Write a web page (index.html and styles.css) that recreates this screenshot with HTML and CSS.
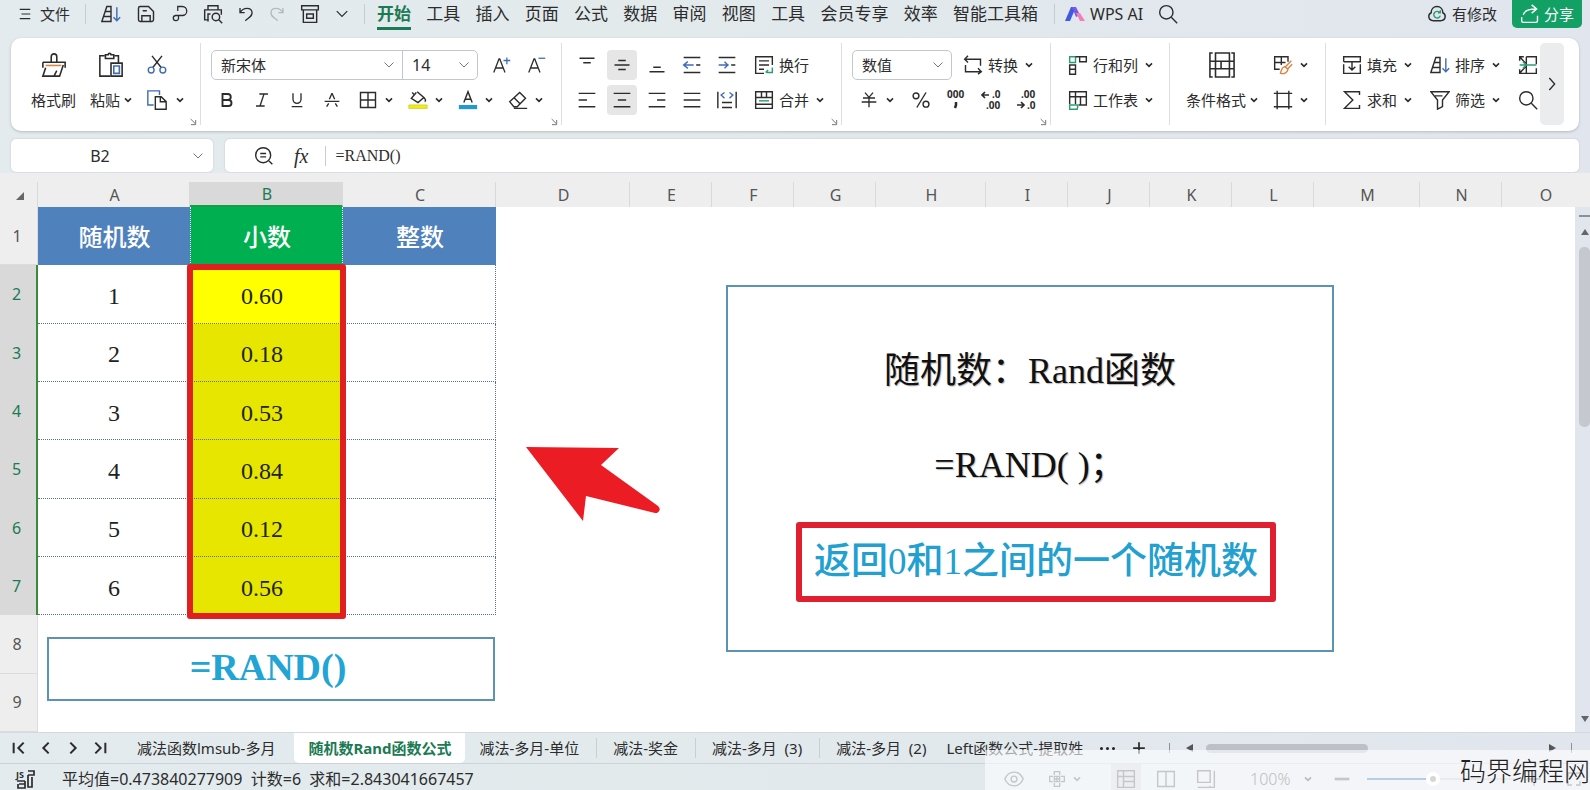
FILE: index.html
```html
<!DOCTYPE html>
<html lang="zh-CN">
<head>
<meta charset="utf-8">
<title>随机数Rand函数公式</title>
<link rel="stylesheet" href="styles.css">
</head>
<body>
<svg class="sprite" aria-hidden="true">
  <symbol id="menu" viewBox="0 0 24 24"><path d="M3 4h18M6 12h15M3 20h18"/></symbol>
  <symbol id="sort" viewBox="0 0 24 24"><path d="M1 21L7 3h5v18zM5 9h7M3.500 15H12"/><path class="blue" d="M19 4v16M15 16l4 4 4-4"/></symbol>
  <symbol id="save" viewBox="0 0 24 24"><path d="M5 3h10l6 6v10a2 2 0 0 1-2 2H5a2 2 0 0 1-2-2V5a2 2 0 0 1 2-2zM7 21v-7h10v7M8 8h5"/></symbol>
  <symbol id="hook" viewBox="0 0 24 24"><path d="M9 8V2h6a6 6 0 0 1 0 12H6a3.500 3.500 0 1 0 4 4v-4"/></symbol>
  <symbol id="preview" viewBox="0 0 24 24"><path d="M6 7V2h12v5M7 19H2V7h20v6M6 21v-9h3"/><circle cx="15.500" cy="15.500" r="4.500"/><path d="M19 19l4 4"/></symbol>
  <symbol id="undo" viewBox="0 0 24 24"><path d="M3 3v7h7M3 10C8 1 20 2 21 9c1 6-4 8-10 13"/></symbol>
  <symbol id="redo" viewBox="0 0 24 24"><path d="M21 3v7h-7M21 10C16 1 4 2 3 9c-1 6 4 8 10 13"/></symbol>
  <symbol id="archive" viewBox="0 0 24 24"><path d="M2 2h20v5H2zM4 7v15h16V7M8 12h8v5H8z"/></symbol>
  <symbol id="down" viewBox="0 0 24 24"><path d="M3 7l9 9 9-9"/></symbol>
  <symbol id="right" viewBox="0 0 24 24"><path d="M8 3l8 9-8 9"/></symbol>
  <symbol id="search" viewBox="0 0 24 24"><circle cx="10" cy="10" r="8"/><path d="M16 16l7 7"/></symbol>
  <symbol id="cloud" viewBox="0 0 24 24"><path d="M7 20a5 5 0 0 1-2-9.500C5 6 8 3 12 3s7 3 7 7.500A5 5 0 0 1 17 20z"/><path class="green" d="M15 10a4 4 0 1 0 1 4M13 10.500h3v-3"/></symbol>
  <symbol id="share" viewBox="0 0 24 24"><path d="M21 14v6a2 2 0 0 1-2 2H4a2 2 0 0 1-2-2v-4M4 13c1-5 6-7 15-7M14 1l6 5-6 5"/></symbol>
  <symbol id="brush" viewBox="0 0 28 28"><path d="M2 11h24v6M2 17v-6M11 11V5a3 3 0 0 1 6 0v6M5 17L2 26h18l4-12M14 26l3-6"/><path class="orange" d="M5 14.500h17"/></symbol>
  <symbol id="paste" viewBox="0 0 28 28"><path d="M7 4H2v22h11M18 4h4v8M8 7V3h3c0-2 3-2 3 0h3v4z"/><path d="M14 12h12v14H14z"/><path class="blue" d="M17 15h6v8h-6z"/></symbol>
  <symbol id="cut" viewBox="0 0 24 24"><path d="M6 1l11 14M18 1L7 15"/><g class="blue"><circle cx="5" cy="18" r="3.500"/><circle cx="19" cy="18" r="3.500"/></g></symbol>
  <symbol id="copy" viewBox="0 0 24 24"><path class="blue" d="M8 18H1V1h14v5"/><path d="M10 8h7l6 6v9H10zM16 8v6h7"/></symbol>
  <symbol id="launch" viewBox="0 0 24 24"><path d="M5 3l13 13M6 20h14V6"/></symbol>
  <symbol id="bigger" viewBox="0 0 24 24"><path d="M1 22L8 4h1l7 18M4 16h9"/><path class="blue" d="M14 6h9M18.500 2v9"/></symbol>
  <symbol id="smaller" viewBox="0 0 24 24"><path d="M1 22L8 4h1l7 18M4 16h9"/><path class="blue" d="M14 3h9"/></symbol>
  <symbol id="bold" viewBox="0 0 24 24"><path class="thick" d="M6 4h7a4 4 0 0 1 0 8H6zM6 12h8a4 4 0 0 1 0 8H6z"/></symbol>
  <symbol id="italic" viewBox="0 0 24 24"><path d="M8 3h13M3 21h13M15 3L9 21"/></symbol>
  <symbol id="under" viewBox="0 0 24 24"><path d="M6 2v9a6 6 0 0 0 12 0V2M4 22h16"/></symbol>
  <symbol id="strike" viewBox="0 0 24 24"><path d="M12 2L8 11M12 2l4 9M1 14h22M7 17l-3 5M17 17l3 5"/></symbol>
  <symbol id="borders" viewBox="0 0 24 24"><path d="M3 3h18v18H3zM12 3v18M3 12h18"/></symbol>
  <symbol id="bucket" viewBox="0 0 24 24"><path d="M11 2l8 7-7 6-8-5 6-7M7 5L5 3M19 9c2 2 3 4 1 5"/><path class="fill-y" d="M1 18h22v4H1z"/></symbol>
  <symbol id="fontcolor" viewBox="0 0 24 24"><path d="M7 15l5-13 5 13M8.500 11h7"/><path class="fill-b" d="M1 18h22v5H1z"/></symbol>
  <symbol id="eraser" viewBox="0 0 24 24"><path d="M2 14L14 3l7 7-10 10H7zM7 9l8 8M7 22h16"/></symbol>
  <symbol id="vtop" viewBox="0 0 24 24"><path d="M2 3h20M7 9h10"/></symbol>
  <symbol id="vmid" viewBox="0 0 24 24"><path d="M7 6h10M2 12h20M7 18h10"/></symbol>
  <symbol id="vbot" viewBox="0 0 24 24"><path d="M7 15h10M2 21h20"/></symbol>
  <symbol id="left" viewBox="0 0 24 24"><path d="M2 4h20M2 12h10M2 20h20"/></symbol>
  <symbol id="center" viewBox="0 0 24 24"><path d="M2 4h20M7 12h10M2 20h20"/></symbol>
  <symbol id="ralign" viewBox="0 0 24 24"><path d="M2 4h20M12 12h10M2 20h20"/></symbol>
  <symbol id="justify" viewBox="0 0 24 24"><path d="M2 4h20M2 12h20M2 20h20"/></symbol>
  <symbol id="outdent" viewBox="0 0 24 24"><path d="M2 3h20M2 21h20M17 12h5"/><path class="blue" d="M14 12H2M7 8l-5 4 5 4"/></symbol>
  <symbol id="indent" viewBox="0 0 24 24"><path d="M2 3h20M2 21h20M17 12h5"/><path class="blue" d="M2 12h12M9 8l4 4-4 4"/></symbol>
  <symbol id="spread" viewBox="0 0 24 24"><path d="M1 2v20M23 2v20M6 15h12M6 21h12"/><path class="blue" d="M9 3L5 6l4 4M15 3l4 3-4 4"/></symbol>
  <symbol id="wrap" viewBox="0 0 24 24"><path d="M22 12V2H2v20h10M6 7h12M6 12h12M6 17h6"/><path class="green" d="M22 15v6h-7M17 18l-3 3"/></symbol>
  <symbol id="merge" viewBox="0 0 24 24"><path d="M2 2h20v20H2zM2 9h20M9 2v7M15 2v7M2 17h20"/><path class="green" d="M6 13h12"/></symbol>
  <symbol id="convert" viewBox="0 0 24 24"><path d="M6 1L2 5l4 4M2 5h19v8M3 12v8h18M18 16l4 4-4 3"/></symbol>
  <symbol id="yuan" viewBox="0 0 24 24"><path d="M6 1l6 7 6-7M3 9h18M1 15h22M12 8v15"/></symbol>
  <symbol id="percent" viewBox="0 0 24 24"><circle cx="6" cy="7" r="3.500"/><circle cx="18" cy="17" r="3.500"/><path d="M18 3L7 21"/></symbol>
  <symbol id="rowcol" viewBox="0 0 24 24"><path class="green" d="M2 2h7v7H2z"/><path d="M9 2h13v6h-8V2M2 12h7v11H2zM2 17h7"/></symbol>
  <symbol id="sheeticon" viewBox="0 0 24 24"><path d="M2 17V2h20v16h-9M2 8h20M9 2v15M15 8v10"/><path class="green" d="M2 18h10l-1 5H2z"/></symbol>
  <symbol id="condition" viewBox="0 0 28 28"><path d="M4 1H1v26h3M24 1h3v26h-3M1 10h6M1 18h6M7 1h15v9H7zM13 10h9v8h-9zM7 10v17h15v-9H7M22 10h5M22 18h5"/></symbol>
  <symbol id="style" viewBox="0 0 24 24"><path d="M8 17H2V2h16v6M2 9h13M10 2v10"/><path class="orange" d="M22 7l-8 8M23 11l-6 6M14 14l4 3c-1 5-5 6-9 5 1-3 1-7 5-8z"/></symbol>
  <symbol id="frame" viewBox="0 0 24 24"><path d="M5 1v22M19 1v22M1 4h22M1 20h22"/></symbol>
  <symbol id="fill" viewBox="0 0 24 24"><path d="M2 8V2h20v6H2M2 11v11h20V11M12 8v10M8 14l4 4 4-4"/></symbol>
  <symbol id="sum" viewBox="0 0 24 24"><path d="M21 6V2H3l10 10L3 22h18v-4"/></symbol>
  <symbol id="filter" viewBox="0 0 24 24"><path d="M1 2h22l-8 10v8l-6 3V12zM6 7h9"/></symbol>
  <symbol id="freeze" viewBox="0 0 24 24"><path d="M2 7V2h5M2 17v5h20v-6M10 2h12v9M10 2v20M2 2l7 8M2 22l7-8"/><path class="green" d="M2 12h20M6 8l4 4-4 4"/></symbol>
  <symbol id="zoomout" viewBox="0 0 24 24"><circle cx="11" cy="11" r="9"/><path d="M18 18l4 4M7.500 9h7M7.500 13h7"/></symbol>
  <symbol id="first" viewBox="0 0 24 24"><path d="M4 4v16M19 4l-8 8 8 8"/></symbol>
  <symbol id="prev" viewBox="0 0 24 24"><path d="M16 4l-8 8 8 8"/></symbol>
  <symbol id="next" viewBox="0 0 24 24"><path d="M8 4l8 8-8 8"/></symbol>
  <symbol id="last" viewBox="0 0 24 24"><path d="M20 4v16M5 4l8 8-8 8"/></symbol>
  <symbol id="plus" viewBox="0 0 24 24"><path d="M12 2v20M2 12h20"/></symbol>
  <symbol id="minus" viewBox="0 0 24 24"><path d="M1 12h22"/></symbol>
  <symbol id="eye" viewBox="0 0 24 24"><path d="M1 12c5-11 17-11 22 0-5 11-17 11-22 0z"/><circle cx="12" cy="12" r="3.500"/></symbol>
  <symbol id="cross" viewBox="0 0 24 24"><path d="M8 6V1h8v5M8 18v5h8v-5M6 8H1v8h5M18 8h5v8h-5M8 8h8v8H8zM12 8v8M8 12h8"/></symbol>
  <symbol id="normal" viewBox="0 0 24 24"><path d="M2 2h20v20H2zM2 9h20M9 2v20M9 15h13"/></symbol>
  <symbol id="split" viewBox="0 0 24 24"><path d="M2 3h20v18H2zM12 3v18"/></symbol>
  <symbol id="pages" viewBox="0 0 24 24"><path d="M2 2h15v14H2zM22 2v20H2M17 22v-2"/></symbol>
  <symbol id="expand" viewBox="0 0 24 24"><path d="M15 3h6v6M9 21H3v-6M3 9V3h6M21 15v6h-6"/></symbol>
</svg>

<header class="topbar">
  <nav class="quick" aria-label="快速访问">
    <button class="file"><svg class="i14"><use href="#menu"/></svg>文件</button>
    <span class="vline"></span>
    <button aria-label="排序"><svg class="i20"><use href="#sort"/></svg></button>
    <button aria-label="保存"><svg class="i20"><use href="#save"/></svg></button>
    <button aria-label="输出"><svg class="i18"><use href="#hook"/></svg></button>
    <button aria-label="打印预览"><svg class="i20"><use href="#preview"/></svg></button>
    <button aria-label="撤销"><svg class="i16"><use href="#undo"/></svg></button>
    <button aria-label="恢复" class="faded"><svg class="i16"><use href="#redo"/></svg></button>
    <button aria-label="归档"><svg class="i20"><use href="#archive"/></svg></button>
    <button aria-label="更多"><svg class="i14"><use href="#down"/></svg></button>
    <span class="vline"></span>
  </nav>
  <nav class="menus" aria-label="功能区">
    <button class="on">开始</button><button>工具</button><button>插入</button><button>页面</button><button>公式</button><button>数据</button><button>审阅</button><button>视图</button><button>工具</button><button>会员专享</button><button>效率</button><button>智能工具箱</button>
  </nav>
  <span class="vline ai-line"></span>
  <button class="ai">
    <svg class="logo" viewBox="0 0 20 16"><path d="M0 15L6 1h5L5 15z" fill="#3c5be0"/><path d="M7 1h4l4 8-4 2z" fill="#7a58e8"/><path d="M11 7h4l5 8h-5z" fill="#f47fb6"/></svg>WPS AI</button>
  <button class="find" aria-label="搜索"><svg class="i20"><use href="#search"/></svg></button>
  <button class="changed"><svg class="i20"><use href="#cloud"/></svg>有修改</button>
  <button class="share"><svg class="i20"><use href="#share"/></svg>分享</button>
</header>

<section class="ribbon" aria-label="开始">
  <div class="group g-clip">
    <button class="big"><svg class="i26"><use href="#brush"/></svg><span>格式刷</span></button>
    <button class="big"><svg class="i26"><use href="#paste"/></svg><span>粘贴<svg class="caret"><use href="#down"/></svg></span></button>
    <div class="stack">
      <button class="tool" aria-label="剪切"><svg class="i20"><use href="#cut"/></svg></button>
      <button class="tool" aria-label="复制"><svg class="i20"><use href="#copy"/></svg><svg class="caret"><use href="#down"/></svg></button>
    </div>
    <svg class="launch"><use href="#launch"/></svg>
  </div>

  <div class="group g-font">
    <div class="stack">
      <div class="row">
        <div class="combo">
          <label class="pick face"><select aria-label="字体"><option>新宋体</option></select><svg class="chev"><use href="#down"/></svg></label>
          <label class="pick size"><select aria-label="字号"><option>14</option></select><svg class="chev"><use href="#down"/></svg></label>
        </div>
        <button class="sq" aria-label="增大字号"><svg class="i18"><use href="#bigger"/></svg></button>
        <button class="sq" aria-label="减小字号"><svg class="i18"><use href="#smaller"/></svg></button>
      </div>
      <div class="row">
        <button class="sq" aria-label="加粗"><svg class="i18"><use href="#bold"/></svg></button>
        <button class="sq" aria-label="倾斜"><svg class="i16"><use href="#italic"/></svg></button>
        <button class="sq" aria-label="下划线"><svg class="i16"><use href="#under"/></svg></button>
        <button class="sq" aria-label="删除线"><svg class="i16"><use href="#strike"/></svg></button>
        <button class="drop" aria-label="边框"><svg class="i20"><use href="#borders"/></svg><svg class="caret"><use href="#down"/></svg></button>
        <button class="drop" aria-label="填充颜色"><svg class="i20"><use href="#bucket"/></svg><svg class="caret"><use href="#down"/></svg></button>
        <button class="drop" aria-label="字体颜色"><svg class="i20"><use href="#fontcolor"/></svg><svg class="caret"><use href="#down"/></svg></button>
        <button class="drop" aria-label="清除"><svg class="i20"><use href="#eraser"/></svg><svg class="caret"><use href="#down"/></svg></button>
      </div>
    </div>
    <svg class="launch"><use href="#launch"/></svg>
  </div>

  <div class="group g-align">
    <div class="stack">
      <div class="row">
        <button class="sq" aria-label="顶端对齐"><svg class="i18"><use href="#vtop"/></svg></button>
        <button class="sq" aria-label="垂直居中"><span class="active"><svg class="i18"><use href="#vmid"/></svg></span></button>
        <button class="sq" aria-label="底端对齐"><svg class="i18"><use href="#vbot"/></svg></button>
        <button class="sq" aria-label="减少缩进"><svg class="i20"><use href="#outdent"/></svg></button>
        <button class="sq" aria-label="增加缩进"><svg class="i20"><use href="#indent"/></svg></button>
        <button class="tool wide"><svg class="i20"><use href="#wrap"/></svg>换行</button>
      </div>
      <div class="row">
        <button class="sq" aria-label="左对齐"><svg class="i20"><use href="#left"/></svg></button>
        <button class="sq" aria-label="水平居中"><span class="active"><svg class="i20"><use href="#center"/></svg></span></button>
        <button class="sq" aria-label="右对齐"><svg class="i20"><use href="#ralign"/></svg></button>
        <button class="sq" aria-label="两端对齐"><svg class="i20"><use href="#justify"/></svg></button>
        <button class="sq" aria-label="分散对齐"><svg class="i20"><use href="#spread"/></svg></button>
        <button class="tool wide"><svg class="i20"><use href="#merge"/></svg>合并<svg class="caret"><use href="#down"/></svg></button>
      </div>
    </div>
    <svg class="launch"><use href="#launch"/></svg>
  </div>

  <div class="group g-num">
    <div class="stack">
      <div class="row">
        <div class="combo"><label class="pick kind"><select aria-label="数字格式"><option>数值</option></select><svg class="chev"><use href="#down"/></svg></label></div>
        <button class="tool conv"><svg class="i20"><use href="#convert"/></svg>转换<svg class="caret"><use href="#down"/></svg></button>
      </div>
      <div class="row">
        <button class="drop money" aria-label="货币"><svg class="i16"><use href="#yuan"/></svg><svg class="caret"><use href="#down"/></svg></button>
        <button class="sq" aria-label="百分比"><svg class="i20"><use href="#percent"/></svg></button>
        <button class="sq" aria-label="千位分隔"><svg class="dec" viewBox="0 0 22 22"><text x="2" y="9">000</text><path d="M11 13v3l-1 3" class="thick"/></svg></button>
        <button class="sq" aria-label="增加小数位"><svg class="dec" viewBox="0 0 22 22"><path d="M9 6H2M5 3L2 6l3 3"/><text x="12" y="9">.0</text><text x="6" y="20">.00</text></svg></button>
        <button class="sq" aria-label="减少小数位"><svg class="dec" viewBox="0 0 22 22"><text x="6" y="9">.00</text><path d="M2 16h7M6 13l3 3-3 3"/><text x="12" y="20">.0</text></svg></button>
      </div>
    </div>
    <svg class="launch"><use href="#launch"/></svg>
  </div>

  <div class="group g-cells">
    <div class="stack">
      <button class="tool"><svg class="i20"><use href="#rowcol"/></svg>行和列<svg class="caret"><use href="#down"/></svg></button>
      <button class="tool"><svg class="i20"><use href="#sheeticon"/></svg>工作表<svg class="caret"><use href="#down"/></svg></button>
    </div>
  </div>

  <div class="group g-style">
    <button class="big"><svg class="i26"><use href="#condition"/></svg><span>条件格式<svg class="caret"><use href="#down"/></svg></span></button>
    <div class="stack">
      <button class="tool" aria-label="样式"><svg class="i20"><use href="#style"/></svg><svg class="caret"><use href="#down"/></svg></button>
      <button class="tool" aria-label="单元格"><svg class="i20"><use href="#frame"/></svg><svg class="caret"><use href="#down"/></svg></button>
    </div>
  </div>

  <div class="group g-edit">
    <div class="stack">
      <button class="tool"><svg class="i20"><use href="#fill"/></svg>填充<svg class="caret"><use href="#down"/></svg></button>
      <button class="tool"><svg class="i20"><use href="#sum"/></svg>求和<svg class="caret"><use href="#down"/></svg></button>
    </div>
    <div class="stack">
      <button class="tool"><svg class="i20"><use href="#sort"/></svg>排序<svg class="caret"><use href="#down"/></svg></button>
      <button class="tool"><svg class="i20"><use href="#filter"/></svg>筛选<svg class="caret"><use href="#down"/></svg></button>
    </div>
    <div class="stack end-stack">
      <button class="tool" aria-label="冻结"><svg class="i20"><use href="#freeze"/></svg></button>
      <button class="tool" aria-label="查找"><svg class="i20"><use href="#search"/></svg></button>
    </div>
    <button class="more" aria-label="更多工具"><svg class="i16"><use href="#right"/></svg></button>
  </div>
</section>

<section class="formula">
  <div class="namebox"><input aria-label="名称框" value="B2"><svg class="chev"><use href="#down"/></svg></div>
  <div class="fxbar">
    <button aria-label="浏览公式"><svg class="i20"><use href="#zoomout"/></svg></button>
    <button class="fx">fx</button>
    <span class="vline"></span>
    <input aria-label="编辑栏" value="=RAND()">
  </div>
</section>

<main class="sheet">
  <table>
    <colgroup><col class="c-head"><col class="c-a"><col class="c-b"><col class="c-b"><col class="c-d"><col class="c-n"><col class="c-n"><col class="c-n"><col class="c-h"><col class="c-n"><col class="c-n"><col class="c-n"><col class="c-n"><col class="c-m"><col class="c-n"><col></colgroup>
    <thead><tr><th class="corner"><svg viewBox="0 0 8 8"><path d="M8 0v8H0z"/></svg></th><th>A</th><th class="sel">B</th><th>C</th><th>D</th><th>E</th><th>F</th><th>G</th><th>H</th><th>I</th><th>J</th><th>K</th><th>L</th><th>M</th><th>N</th><th>O</th></tr></thead>
    <tbody>
      <tr class="titles"><th>1</th><td>随机数</td><td class="pick-col">小数</td><td>整数</td><td colspan="12"></td></tr>
      <tr class="data"><th>2</th><td>1</td><td class="val cur">0.60</td><td class="end"></td><td colspan="12"></td></tr>
      <tr class="data"><th>3</th><td>2</td><td class="val">0.18</td><td class="end"></td><td colspan="12"></td></tr>
      <tr class="data"><th>4</th><td>3</td><td class="val">0.53</td><td class="end"></td><td colspan="12"></td></tr>
      <tr class="data"><th>5</th><td>4</td><td class="val">0.84</td><td class="end"></td><td colspan="12"></td></tr>
      <tr class="data"><th>6</th><td>5</td><td class="val">0.12</td><td class="end"></td><td colspan="12"></td></tr>
      <tr class="data"><th>7</th><td>6</td><td class="val">0.56</td><td class="end"></td><td colspan="12"></td></tr>
      <tr><th>8</th><td colspan="15"></td></tr>
      <tr><th>9</th><td colspan="15"></td></tr>
    </tbody>
  </table>
  <div class="mark"></div>
  <div class="formula-box">=RAND()</div>
  <svg class="arrow" viewBox="0 0 136 76"><path d="M0 1l93 1-18 17 57 41q4 4-1 7l-2 0-69-17-3 25z"/></svg>
  <div class="note">
    <p>随机数：Rand函数</p>
    <p>=RAND( )；</p>
    <p class="key">返回0和1之间的一个随机数</p>
  </div>
  <div class="vscroll"><i></i><svg viewBox="0 0 8 8"><path d="M4 1l4 6H0z"/></svg><b></b><svg viewBox="0 0 8 8"><path d="M0 1h8L4 7z"/></svg></div>
</main>

<footer>
  <div class="tabs">
    <div class="nav">
      <button aria-label="第一个"><svg class="i16"><use href="#first"/></svg></button>
      <button aria-label="上一个"><svg class="i16"><use href="#prev"/></svg></button>
      <button aria-label="下一个"><svg class="i16"><use href="#next"/></svg></button>
      <button aria-label="最后一个"><svg class="i16"><use href="#last"/></svg></button>
    </div>
    <button class="tab lead">减法函数lmsub-多月</button>
    <button class="tab current">随机数Rand函数公式</button>
    <button class="tab ruled">减法-多月-单位</button>
    <button class="tab ruled">减法-奖金</button>
    <button class="tab ruled">减法-多月&nbsp; (3)</button>
    <button class="tab">减法-多月&nbsp; (2)</button>
    <button class="tab cut">Left函数公式-提取姓</button>
    <button class="dots" aria-label="更多工作表"><i></i><i></i><i></i></button>
    <button class="add" aria-label="新建工作表"><svg class="i14"><use href="#plus"/></svg></button>
    <div class="hscroll"><i></i><svg viewBox="0 0 8 8"><path d="M7 0v8L0 4z"/></svg><b></b><svg class="far" viewBox="0 0 8 8"><path d="M1 0v8l7-4z"/></svg><i></i></div>
  </div>
  <div class="status">
    <svg class="jsp" viewBox="0 0 20 20"><text x="1" y="9">JS</text><path d="M13 2h6v4h-6M13 6v12h4V8M2 12h8M4 15h6v4H3v-4M10 12v3"/></svg>
    <output>平均值=0.473840277909&nbsp; 计数=6&nbsp; 求和=2.843041667457</output>
    <div class="views">
      <button aria-label="护眼"><svg class="i20"><use href="#eye"/></svg></button>
      <button class="cross" aria-label="定位"><svg class="i16"><use href="#cross"/></svg><svg class="caret"><use href="#down"/></svg></button>
      <button class="view on" aria-label="普通视图"><svg class="i20"><use href="#normal"/></svg></button>
      <button class="view" aria-label="分栏"><svg class="i20"><use href="#split"/></svg></button>
      <button class="view" aria-label="分页预览"><svg class="i20"><use href="#pages"/></svg></button>
      <button class="pct">100%<svg class="caret"><use href="#down"/></svg></button>
      <button aria-label="缩小"><svg class="i16 heavy"><use href="#minus"/></svg></button>
      <input type="range" min="0" max="100" value="43" aria-label="显示比例">
      <button aria-label="放大"><svg class="i16"><use href="#plus"/></svg></button>
      <button class="full" aria-label="全屏"><svg class="i16"><use href="#expand"/></svg></button>
    </div>
  </div>
  <div class="stamp">码界编程网</div>
</footer>
</body>
</html>
```
FILE: styles.css
```css
* { box-sizing: border-box; }
html, body { height: 100%; }
body {
  margin: 0;
  display: flex;
  flex-direction: column;
  overflow: hidden;
  background: linear-gradient(90deg, #e3ebef, #e2eaec 40%, #e1e6ee);
  color: #2c2c2c;
  font: 15px/20px "Noto Sans", "Noto Sans CJK SC", sans-serif;
}
button, input, select {
  font: inherit;
  color: inherit;
  background: none;
  border: 0;
  margin: 0;
  padding: 0;
  outline: 0;
}
button { display: flex; align-items: center; flex: none; white-space: nowrap; }
svg { fill: none; stroke: currentColor; stroke-width: 1.7; flex: none; }
.sprite { position: absolute; width: 0; height: 0; }
.i14 { width: 14px; height: 14px; stroke-width: 2; }
.i16 { width: 16px; height: 16px; stroke-width: 2; }
.i18 { width: 18px; height: 18px; }
.i20 { width: 20px; height: 20px; }
.i26 { width: 26px; height: 26px; }
.caret { width: 8px; height: 8px; stroke-width: 5; }
.chev { width: 12px; height: 12px; stroke: #777; stroke-width: 2; }
.blue { stroke: #3f6cb8; }
.green { stroke: #2b9c74; }
.orange { stroke: #d98443; }
.thick { stroke-width: 2.5; }
.fill-y { fill: #f5f200; stroke: #c9c93a; stroke-width: 1; }
.fill-b { fill: #1f9bd0; stroke: none; }
.vline { width: 1px; height: 20px; background: #c6ccd2; flex: none; }

/* title row */
.topbar { display: flex; height: 38px; padding: 0 8px 10px 18px; align-items: center; flex: none; }
.quick { display: flex; align-items: center; width: 359px; justify-content: space-between; padding-right: 12px; flex: none; }
.file { gap: 8px; }
.faded { color: #b3b9bd; }
.menus { display: flex; justify-content: space-between; width: 661px; flex: none; font-size: 17px; }
.menus .on { color: #1b7a53; font-weight: 700; border-bottom: 3px solid #1b7a53; padding: 6px 0 3px; margin: -6px 0; }
.ai-line { margin: 0 10px 0 16px; }
.ai { gap: 5px; font-size: 16px; }
.logo { width: 20px; height: 16px; stroke: none; }
.find { margin-left: 15px; }
.changed { margin-left: auto; gap: 5px; }
.share { margin-left: 15px; width: 70px; height: 28px; gap: 4px; justify-content: center; background: #12a065; color: #fff; border-radius: 0 0 5px 5px; }

/* ribbon */
.ribbon { display: flex; flex: none; height: 93px; margin: 0 11px; background: #fff; border-radius: 10px; box-shadow: 0 1px 3px #b5babf; padding: 5px 0 6px; }
.group { position: relative; display: flex; flex: none; height: 82px; padding-top: 4px; border-right: 1px solid #dcdee0; }
.launch { position: absolute; right: 3px; bottom: -1px; width: 8px; height: 8px; stroke-width: 3; color: #777; }
.stack { display: flex; flex-direction: column; }
.stack > * { height: 35px; }
.row { display: flex; align-items: center; }
.tool { gap: 5px; }
.tool .caret { margin-left: 2px; }
.big { flex-direction: column; height: 70px; padding-top: 5px; }
.big > span { display: flex; align-items: center; gap: 4px; height: 35px; margin-top: 4px; }
.sq { width: 35px; height: 35px; justify-content: center; }
.drop { width: 50px; height: 35px; justify-content: space-between; padding: 0 6px 0 9px; }
.active { display: flex; width: 30px; height: 30px; align-items: center; justify-content: center; background: #e6e6e6; border-radius: 4px; }
.combo { display: flex; height: 30px; border: 1px solid #c4c7ca; border-radius: 5px; }
.pick { display: grid; align-items: center; }
.pick > * { grid-area: 1 / 1; }
.pick select { appearance: none; width: 100%; height: 28px; padding-left: 9px; }
.pick .chev { justify-self: end; margin-right: 7px; pointer-events: none; }
.face { width: 190px; }
.size { width: 75px; border-left: 1px solid #c4c7ca; font-size: 16px; }
.kind { width: 98px; }
.g-clip { width: 190px; padding-left: 20px; gap: 14px; }
.g-clip .stack { padding-left: 1px; }
.g-clip .tool .caret { margin-left: 4px; }
.g-font { width: 361px; padding-left: 10px; }
.g-font .row:first-child .sq:nth-child(2) { margin-left: 6px; }
.g-font .row:last-child { margin-left: -2px; }
.g-align { width: 280px; padding-left: 7px; }
.wide { margin-left: 10px; }
.g-num { width: 209px; padding-left: 10px; }
.conv { margin-left: 11px; }
.money { width: 51px; padding: 0 9px 0 9px; }
.dec { width: 22px; height: 22px; }
.dec text { font-size: 10px; font-weight: 700; fill: currentColor; stroke: none; }
.g-cells { width: 119px; padding-left: 17px; }
.g-style { width: 156px; padding-left: 16px; gap: 15px; }
.g-edit { flex: 1; padding-left: 16px; border: 0; }
.g-edit .stack { margin-right: 18px; }
.g-edit .end-stack { margin-right: 0; }
.more { margin: -4px 15px 0 auto; width: 24px; height: 82px; background: #ebecee; border-radius: 5px; justify-content: center; }

/* name box and formula bar */
.formula { display: flex; flex: none; gap: 12px; padding: 8px 11px 0; height: 42px; }
.namebox, .fxbar { display: flex; align-items: center; background: #fff; border-radius: 5px; box-shadow: 0 0 2px #bbc0c4; height: 33px; }
.namebox { width: 202px; padding-right: 9px; }
.namebox input { flex: 1; min-width: 0; text-align: center; padding-right: 3px; font-size: 16px; }
.fxbar { flex: 1; padding-left: 29px; }
.fx { font: italic 20px/24px "Liberation Serif", serif; margin: 0 17px 0 20px; }
.fxbar input { flex: 1; padding-left: 9px; font: 16px/24px "Liberation Serif", serif; }

/* grid */
.sheet { position: relative; flex: 1; min-height: 0; padding-top: 9px; background: #eeeeee; overflow: hidden; }
table { width: 100%; height: 100%; table-layout: fixed; border-collapse: separate; border-spacing: 0; }
.c-head { width: 38px; }
.c-a { width: 152px; }
.c-b { width: 153px; }
.c-d { width: 134px; }
.c-n { width: 82px; }
.c-h { width: 110px; }
.c-m { width: 106px; }
th, td { padding: 0; text-align: center; }
th { font-weight: 400; font-size: 16px; color: #555; }
thead th { height: 25px; border-right: 1px solid #d9d9d9; padding-left: 2px; }
thead th:last-child { padding-left: 0; border: 0; }
thead .sel { background: #d9d9d9; color: #1b7a53; border-bottom: 2px solid #14a047; }
.corner svg { width: 8px; height: 8px; fill: #666; stroke: none; vertical-align: middle; }
tbody tr { height: 58px; }
tbody th { border-bottom: 1px solid #dcdcdc; padding-right: 3px; border-right: 1px solid #dcdcdc; }
td { background: #fff; font: 24px/30px "Liberation Serif", "Noto Sans CJK SC", serif; }
.titles td { color: #fff; font-weight: 500; padding-top: 3px; padding-left: 1px; }
.titles td:nth-child(-n+4) { background: #4f81bd; }
.titles td.pick-col { background: #00b050; border: 1px dotted #fff; border-width: 0 1px; }
.data th { background: #d9d9d9; color: #1b7a53; border-right: 2px solid #3a8a3a; border-bottom: 0; }
.data td:nth-child(-n+4) { border-bottom: 1px dotted #5b6f91; color: #222; padding-top: 4px; }
.data .val { background: #e6e600; padding-right: 9px; }
.data .cur { background: #ffff00; }
.data .end { border-right: 1px dotted #5b6f91; }

/* objects floating over the grid */
.mark { position: absolute; left: 187px; top: 91px; width: 159px; height: 355px; border: 6px solid #e02020; border-radius: 3px; }
.formula-box { position: absolute; left: 47px; top: 464px; width: 448px; height: 64px; border: 2px solid #5b93b5; color: #22a4d4; font: 700 38px/56px "Liberation Serif", serif; text-align: center; padding-right: 6px; }
.arrow { position: absolute; left: 526px; top: 273px; width: 136px; height: 76px; fill: #ec1c24; stroke: none; }
.note { position: absolute; left: 726px; top: 112px; width: 608px; height: 367px; border: 2px solid #5b93b5; color: #111; font: 36px/48px "Liberation Serif", "Noto Sans CJK SC", serif; text-align: center; padding: 60px 0 0; }
.note p { margin: 0 0 46px; text-shadow: 1px 1px 1px #bbb; }
.note .key { margin: -13px 56px 0 68px; height: 80px; border: 6px solid #e02030; border-radius: 3px; color: #22a0d0; font-size: 37px; line-height: 68px; white-space: nowrap; text-shadow: none; font-weight: 500; }
.vscroll { position: absolute; right: 0; top: 34px; bottom: 0; width: 15px; background: #e1e6ee; display: flex; flex-direction: column; align-items: center; padding: 8px 0 9px 4px; }
.vscroll i { width: 11px; height: 2px; background: #8b9097; }
.vscroll svg { width: 8px; height: 8px; fill: #666; stroke: none; }
.vscroll svg:nth-of-type(1) { margin: 11px 0; }
.vscroll svg:nth-of-type(2) { margin-top: auto; }
.vscroll b { width: 11px; height: 180px; background: #c5c9cf; border-radius: 5px; }

/* sheet tabs and status bar */
footer { position: relative; flex: none; }
.tabs { display: flex; align-items: center; height: 32px; border-bottom: 1px solid #cdd3d9; border-top: 1px solid #d5d9dd; padding-left: 11px; }
.nav { display: flex; gap: 11px; width: 126px; flex: none; }
.nav svg { stroke-width: 3; }
.tab { height: 20px; }
.lead { margin-right: 19px; }
.current { align-self: flex-start; height: 30px; padding: 0 14px; margin-right: 14px; background: #fff; color: #1b7a53; font-weight: 700; border-radius: 0 0 5px 5px; }
.ruled { border-right: 1px solid #c9cfd5; padding-right: 17px; margin-right: 16px; }
.cut { width: 142px; margin-left: 20px; overflow: hidden; }
.dots { gap: 3px; margin: 0 17px 0 12px; }
.dots i { width: 3px; height: 3px; border-radius: 2px; background: #222; }
.add svg { stroke-width: 3; }
.hscroll { flex: 1; display: flex; align-items: center; padding: 0 18px 0 23px; }
.hscroll i { width: 1px; height: 10px; background: #8b9097; }
.hscroll svg { width: 8px; height: 8px; fill: #555; stroke: none; margin: 0 12px 0 16px; }
.hscroll .far { margin: 0 15px 0 auto; }
.hscroll b { width: 162px; height: 9px; border-radius: 5px; background: #bcc1c7; }
.status { display: flex; align-items: flex-start; height: 26px; padding: 5px 0 0 15px; }
.status output { font-size: 16px; margin-left: 27px; }
.jsp { width: 20px; height: 20px; overflow: visible; }
.jsp text { font-size: 9px; font-weight: 700; fill: currentColor; stroke: none; }
.views { display: flex; align-items: center; margin-left: auto; width: 586px; height: 20px; color: #6d7176; }
.cross { gap: 8px; margin: 0 30px 0 25px; }
.view { width: 30px; height: 30px; justify-content: center; margin-right: 10px; }
.view.on { background: #cfd5db; }
.pct { gap: 14px; margin: 0 22px 0 19px; font-size: 16px; font-weight: 300; color: #555; }
.heavy { stroke-width: 4; }
.views input { appearance: none; width: 150px; height: 2px; margin: 0 9px 0 17px; background: linear-gradient(90deg, #4a86b8 43%, #c7ccd2 43%); }
.views input::-webkit-slider-thumb { appearance: none; width: 14px; height: 14px; border-radius: 50%; background: #999; border: 4px solid #fff; }
.full { margin-left: 24px; }
.stamp { position: absolute; right: 0; bottom: 0; width: 605px; height: 40px; background: rgba(255, 255, 255, .6); color: #222; font-family: "Noto Sans CJK SC", sans-serif; font-size: 26px; font-weight: 300; line-height: 40px; text-align: right; pointer-events: none; }
```
